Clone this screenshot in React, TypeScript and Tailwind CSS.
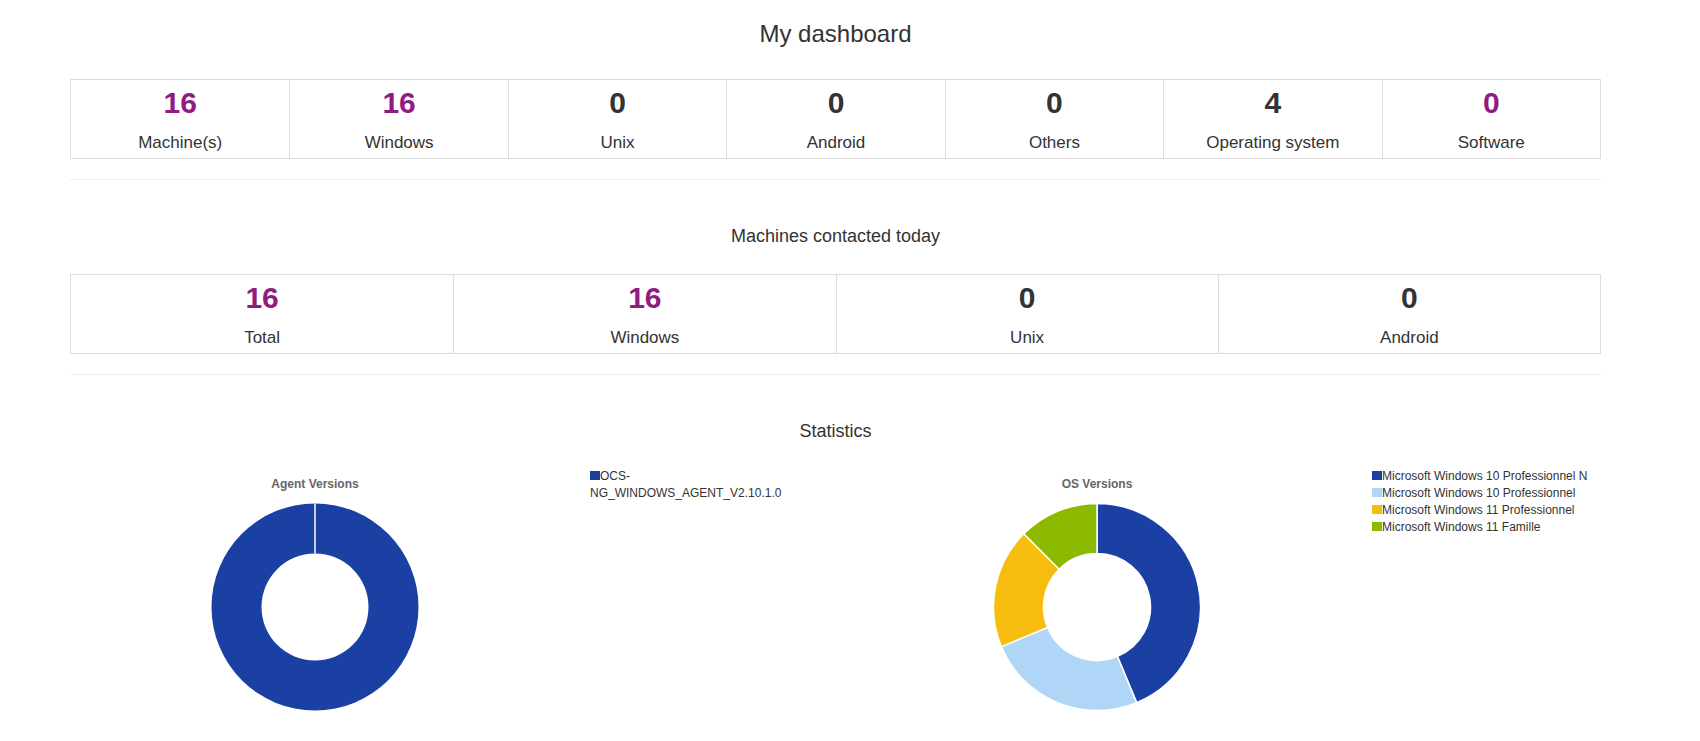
import React from 'react';

type Stat = { value: number; label: string; highlight?: boolean };

const inventory: Stat[] = [
  { value: 16, label: 'Machine(s)', highlight: true },
  { value: 16, label: 'Windows', highlight: true },
  { value: 0, label: 'Unix' },
  { value: 0, label: 'Android' },
  { value: 0, label: 'Others' },
  { value: 4, label: 'Operating system' },
  { value: 0, label: 'Software', highlight: true },
];

const contactedToday: Stat[] = [
  { value: 16, label: 'Total', highlight: true },
  { value: 16, label: 'Windows', highlight: true },
  { value: 0, label: 'Unix' },
  { value: 0, label: 'Android' },
];

type Slice = { label: string; count: number; color: string };

const agentVersions: Slice[] = [
  { label: 'OCS-NG_WINDOWS_AGENT_V2.10.1.0', count: 16, color: '#1a40a3' },
];

const osVersions: Slice[] = [
  { label: 'Microsoft Windows 10 Professionnel N', count: 7, color: '#1a40a3' },
  { label: 'Microsoft Windows 10 Professionnel', count: 4, color: '#afd6f6' },
  { label: 'Microsoft Windows 11 Professionnel', count: 3, color: '#f6bd0f' },
  { label: 'Microsoft Windows 11 Famille', count: 2, color: '#8cba00' },
];

// angle 0 = top, clockwise
function pt(cx: number, cy: number, r: number, a: number) {
  const rad = (a - 90) * (Math.PI / 180);
  return [cx + r * Math.cos(rad), cy + r * Math.sin(rad)];
}

function arcPath(cx: number, cy: number, r0: number, r1: number, a0: number, a1: number) {
  const large = a1 - a0 > 180 ? 1 : 0;
  const [x1, y1] = pt(cx, cy, r1, a0);
  const [x2, y2] = pt(cx, cy, r1, a1);
  const [x3, y3] = pt(cx, cy, r0, a1);
  const [x4, y4] = pt(cx, cy, r0, a0);
  return `M${x1} ${y1} A${r1} ${r1} 0 ${large} 1 ${x2} ${y2} L${x3} ${y3} A${r0} ${r0} 0 ${large} 0 ${x4} ${y4} Z`;
}

function Donut({ data }: { data: Slice[] }) {
  const cx = 104;
  const cy = 104;
  const r1 = 103.5;
  const r0 = 53.5;
  const total = data.reduce((s, d) => s + d.count, 0);

  if (data.length === 1) {
    return (
      <svg width="208" height="208" viewBox="0 0 208 208">
        <path
          fillRule="evenodd"
          fill={data[0].color}
          d={`M${cx - r1} ${cy} a${r1} ${r1} 0 1 0 ${r1 * 2} 0 a${r1} ${r1} 0 1 0 ${-r1 * 2} 0 Z M${cx - r0} ${cy} a${r0} ${r0} 0 1 0 ${r0 * 2} 0 a${r0} ${r0} 0 1 0 ${-r0 * 2} 0 Z`}
        />
        <line x1={cx} y1={cy - r1} x2={cx} y2={cy - r0} stroke="#fff" strokeWidth="1.5" />
      </svg>
    );
  }

  let angle = 0;
  return (
    <svg width="208" height="208" viewBox="0 0 208 208">
      {data.map((d) => {
        const a0 = angle;
        const a1 = angle + (d.count / total) * 360;
        angle = a1;
        return (
          <path
            key={d.label}
            d={arcPath(cx, cy, r0, r1, a0, a1)}
            fill={d.color}
            stroke="#fff"
            strokeWidth="1.5"
            strokeLinejoin="round"
          />
        );
      })}
    </svg>
  );
}

function StatBox({ stats, cols }: { stats: Stat[]; cols: string }) {
  return (
    <div className={`grid ${cols} border border-[#dddddd]`}>
      {stats.map((s, i) => (
        <div
          key={s.label + i}
          className={`flex flex-col items-center pt-[6px] pb-[3px] ${i > 0 ? 'border-l border-[#dddddd]' : ''}`}
        >
          <span
            className={`text-[30px] leading-[34px] font-bold ${s.highlight ? 'text-[#911b80]' : 'text-[#333333]'}`}
          >
            {s.value}
          </span>
          <span className="mt-[11px] text-[17px] leading-[24px] text-[#333333]">{s.label}</span>
        </div>
      ))}
    </div>
  );
}

function ChartPanel({
  title,
  data,
  width,
  legendWidth,
}: {
  title: string;
  data: Slice[];
  width: string;
  legendWidth: string;
}) {
  return (
    <div className={`flex shrink-0 ${width}`}>
      <div className="w-[520px] shrink-0 flex flex-col items-center pt-[32px]">
        <div className="text-[12px] leading-[17px] font-bold text-[#666666]">{title}</div>
        <div className="mt-[10px]">
          <Donut data={data} />
        </div>
      </div>
      <div className={`ml-[15px] pt-[24px] shrink-0 ${legendWidth}`}>
        {data.map((d) => (
          <div key={d.label} className="text-[12px] leading-[17px] text-[#333333]">
            <span className="inline-block w-[10px] h-[9px]" style={{ backgroundColor: d.color }} />
            {d.label}
          </div>
        ))}
      </div>
    </div>
  );
}

export default function App() {
  return (
    <div className="min-h-screen bg-white font-['Liberation_Sans',Arial,sans-serif] text-[#333333]">
      <div className="ml-[70px] w-[1531px]">
        <h1 className="pt-[19px] text-[24px] leading-[30px] text-center">My dashboard</h1>

        <div className="mt-[30px]">
          <StatBox stats={inventory} cols="grid-cols-7" />
        </div>

        <hr className="mt-[20px] border-0 border-t border-[#eeeeee]" />

        <h3 className="mt-[43px] text-[18px] leading-[26px] text-center">Machines contacted today</h3>

        <div className="mt-[25px]">
          <StatBox stats={contactedToday} cols="grid-cols-4" />
        </div>

        <hr className="mt-[20px] border-0 border-t border-[#eeeeee]" />

        <h3 className="mt-[43px] text-[18px] leading-[26px] text-center">Statistics</h3>

        <div className="-ml-[15px] flex">
          <ChartPanel title="Agent Versions" data={agentVersions} width="w-[782px]" legendWidth="w-[200px]" />
          <ChartPanel title="OS Versions" data={osVersions} width="w-[760px]" legendWidth="w-[225px]" />
        </div>
      </div>
    </div>
  );
}
